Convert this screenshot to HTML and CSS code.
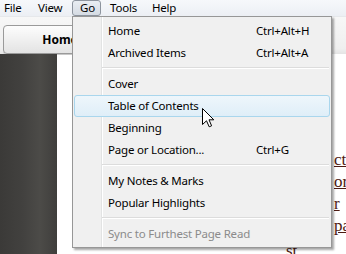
FILE: index.html
```html
<!DOCTYPE html>
<html>
<head>
<meta charset="utf-8">
<link rel="stylesheet" href="styles.css">
</head>
<body>
<div class="app">
  <div class="menubar">
    <span class="mb-item mb-file">File</span>
    <span class="mb-item mb-view">View</span>
    <span class="mb-item mb-go active">Go</span>
    <span class="mb-item mb-tools">Tools</span>
    <span class="mb-item mb-help">Help</span>
  </div>
  <div class="toolbar">
    <button class="home-btn">Home</button>
  </div>
  <div class="main">
    <div class="sidebar"></div>
    <div class="page">
      <div class="book">
        <div class="line">ct</div>
        <div class="line">or</div>
        <div class="line">r</div>
        <div class="line">pa</div>
        <div class="line last">st</div>
      </div>
    </div>
  </div>

  <div class="dropdown">
    <div class="item"><span>Home</span><span>Ctrl+Alt+H</span></div>
    <div class="item"><span>Archived Items</span><span>Ctrl+Alt+A</span></div>
    <div class="sep"></div>
    <div class="item"><span>Cover</span></div>
    <div class="item hover"><span>Table of Contents</span></div>
    <div class="item"><span>Beginning</span></div>
    <div class="item"><span>Page or Location...</span><span>Ctrl+G</span></div>
    <div class="sep"></div>
    <div class="item"><span>My Notes &amp; Marks</span></div>
    <div class="item"><span>Popular Highlights</span></div>
    <div class="sep"></div>
    <div class="item disabled"><span>Sync to Furthest Page Read</span></div>
  </div>

  <svg class="cursor" width="13" height="20" viewBox="0 0 13 20">
    <path d="M0.5 0.5 L0.5 16.5 L4.5 12.8 L7.2 18.8 L9.6 17.8 L7 11.8 L11.8 11.8 Z" fill="#fff" stroke="#000" stroke-width="1" stroke-linejoin="miter"/>
  </svg>
</div>
</body>
</html>
```

FILE: styles.css
```css
* { box-sizing: border-box; }
html, body { margin: 0; padding: 0; }
body {
  width: 346px;
  height: 254px;
  overflow: hidden;
  font-family: "Noto Sans", "Open Sans", sans-serif;
  font-size: 11.5px;
  letter-spacing: -0.2px;
  color: #000;
  background: #fff;
}
.app {
  position: relative;
  width: 346px;
  height: 254px;
  display: flex;
  flex-direction: column;
}
.menubar {
  height: 16px;
  display: flex;
  background: linear-gradient(#f6f8fb, #eceff4);
  white-space: nowrap;
}
.mb-item {
  height: 16px;
  border: 1px solid transparent;
  line-height: 14px;
  flex: none;
}
.mb-file { width: 30px; padding-left: 3px; }
.mb-view { width: 42px; padding-left: 7px; }
.mb-go { width: 29px; padding-left: 7px; }
.mb-tools { width: 42px; padding-left: 8px; }
.mb-help { width: 40px; padding-left: 8px; }
.mb-item.active {
  border-color: #8d949e;
  border-radius: 3px;
  background: linear-gradient(#e9edf2, #d5dbe3);
}
.toolbar {
  height: 44px;
  padding: 8px 0 0 3px;
  background: linear-gradient(#f7f7f7, #efefef 85%, #e4e4e4);
  border-top: 1px solid #e6e8eb;
}
.home-btn {
  width: 112px;
  height: 29px;
  border: 1px solid #9a9a9a;
  border-radius: 4px;
  background: linear-gradient(#fdfdfd, #f0f0f0 50%, #e3e3e3);
  box-shadow: 0 1px 0 #c8c8c8;
  font-family: "Noto Sans", sans-serif;
  font-weight: bold;
  font-size: 12px;
  color: #000;
  padding: 0 0 0 2px;
}
.main {
  flex: 1;
  display: flex;
}
.sidebar {
  width: 57px;
  background: linear-gradient(to right, #3b3a38, #42413f 40%, #4c4b48 70%, #3f3e3c);
}
.page {
  flex: 1;
  overflow: hidden;
  padding-top: 95px;
}
.book {
  margin-left: 277px;
  font-family: "Liberation Serif", serif;
  font-size: 17px;
  line-height: 22px;
  letter-spacing: 0;
  color: #4e1a12;
  white-space: nowrap;
}
.line { text-decoration: underline; }
.line.last { margin-left: -48px; padding-top: 3px; text-decoration: none; }

.dropdown {
  position: absolute;
  left: 72px;
  top: 16px;
  width: 260px;
  padding: 3px 2px 2px 2px;
  border: 1px solid #979797;
  background:
    linear-gradient(to right, transparent 28px, #e2e3e3 28px, #e2e3e3 29px, #ffffff 29px, #ffffff 30px, transparent 30px),
    #f0f0f0;
  box-shadow: 2px 2px 2px rgba(0,0,0,0.35);
  white-space: nowrap;
}
.item {
  height: 22px;
  display: grid;
  grid-template-columns: 148px auto;
  align-items: center;
  padding-left: 33px;
  border: 1px solid transparent;
  border-radius: 3px;
  line-height: 20px;
  margin-left: -1px;
  margin-right: -1px;
}
.item.hover {
  border-color: #a9d6ed;
  background: linear-gradient(#eef6fb, #dfeef8);
}
.item.disabled { color: #8b8b8b; }
.sep {
  height: 9px;
  margin-left: 27px;
  position: relative;
}
.sep::after {
  content: "";
  position: absolute;
  left: 0;
  right: 0;
  top: 3px;
  height: 1px;
  background: #dcdcdc;
  border-bottom: 1px solid #fff;
  box-sizing: content-box;
}
.cursor {
  position: absolute;
  left: 202px;
  top: 108px;
}
```
